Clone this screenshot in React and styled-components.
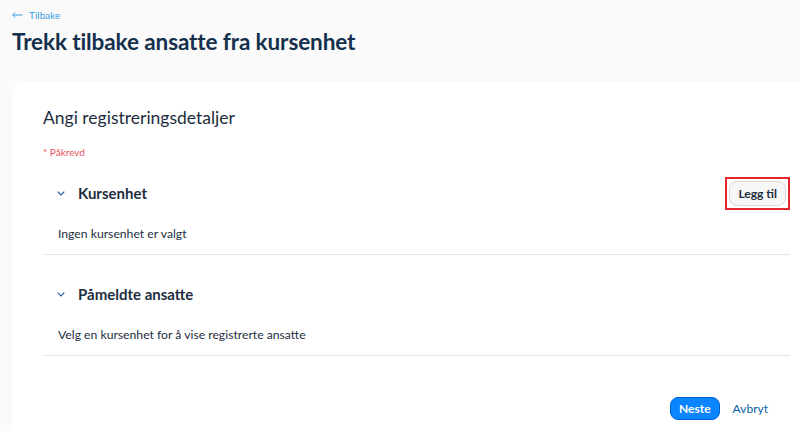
import styled, { createGlobalStyle } from "styled-components";

const GlobalStyle = createGlobalStyle`
    html, body {
        margin: 0;
        padding: 0;
        background: #fafafa;
        font-family: Lato, "Noto Sans", sans-serif;
        color: #1d2d3e;
    }
`;

const Page = styled.div`
    width: 800px;
    height: 431px;
    overflow: hidden;
    display: flex;
    flex-direction: column;
`;

const Header = styled.header`
    padding: 8px 12px 0;
    height: 82px;
    box-sizing: border-box;
`;

const BackLink = styled.a`
    display: flex;
    align-items: center;
    gap: 6px;
    font-size: 10px;
    color: #3a9de3;
    text-decoration: none;
    height: 14px;
`;

const Title = styled.h1`
    margin: 5px 0 0;
    font-size: 22.5px;
    line-height: 30px;
    font-weight: 700;
    color: #14304d;
    letter-spacing: -0.1px;
`;

const Card = styled.main`
    flex: 1;
    margin-left: 12px;
    background: #fff;
    border-top-left-radius: 10px;
    padding: 25px 10px 0 31px;
    display: flex;
    flex-direction: column;
`;

const CardTitle = styled.h2`
    margin: 0;
    font-size: 17.5px;
    line-height: 22px;
    font-weight: 400;
    color: #1d2d3e;
`;

const Required = styled.div`
    margin-top: 17px;
    font-size: 10px;
    line-height: 12px;
    color: #e5525b;
`;

const Section = styled.section`
    border-bottom: 1px solid #e5e5e5;
    padding-bottom: 12px;
    margin-top: ${(p) => p.$gap}px;
`;

const SectionHead = styled.div`
    display: flex;
    align-items: center;
    height: 32px;
    padding-left: 14px;
`;

const SectionTitle = styled.h3`
    margin: 0 0 0 13px;
    font-size: 15px;
    font-weight: 700;
    color: #1d2d3e;
    flex: 1;
`;

const Highlight = styled.div`
    border: 2px solid #e3262c;
    padding: 2px;
    display: flex;
`;

const GhostButton = styled.button`
    font-family: inherit;
    font-size: 12px;
    font-weight: 700;
    color: #1d2d3e;
    background: #f7f7f7;
    border: 1px solid #d9d9d9;
    border-radius: 8px;
    height: 25px;
    padding: 0 8px;
`;

const SectionText = styled.p`
    margin: 17px 0 0 15px;
    font-size: 12.2px;
    color: #1d2d3e;
    line-height: 16px;
`;

const Footer = styled.div`
    margin-top: auto;
    display: flex;
    justify-content: flex-end;
    align-items: center;
    gap: 12px;
    padding: 0 22px 11px 0;
`;

const PrimaryButton = styled.button`
    font-family: inherit;
    font-size: 12px;
    font-weight: 700;
    color: #fff;
    background: #0a84ff;
    border: 1px solid #0064d9;
    border-radius: 8px;
    height: 23px;
    padding: 0 8px;
    margin-right: 1px;
`;

const LinkButton = styled.button`
    font-family: inherit;
    font-size: 12px;
    font-weight: 400;
    color: #0a5fa8;
    background: none;
    border: none;
    padding: 0;
`;

const Chevron = () => (
    <svg width="8" height="5" viewBox="0 0 8 5">
        <path d="M0.7 0.7L4 4 7.3 0.7" fill="none" stroke="#1d5a9a" strokeWidth="1.1" />
    </svg>
);

const Arrow = () => (
    <svg width="11" height="6" viewBox="0 0 11 6">
        <path d="M3 0.5L0.8 3 3 5.5M0.8 3H10.5" fill="none" stroke="#3a9de3" strokeWidth="1" />
    </svg>
);

export default function App() {
    return (
        <Page>
            <GlobalStyle />
            <Header>
                <BackLink href="#">
                    <Arrow />
                    Tilbake
                </BackLink>
                <Title>Trekk tilbake ansatte fra kursenhet</Title>
            </Header>
            <Card>
                <CardTitle>Angi registreringsdetaljer</CardTitle>
                <Required>* Påkrevd</Required>
                <Section $gap={19}>
                    <SectionHead>
                        <Chevron />
                        <SectionTitle>Kursenhet</SectionTitle>
                        <Highlight>
                            <GhostButton>Legg til</GhostButton>
                        </Highlight>
                    </SectionHead>
                    <SectionText>Ingen kursenhet er valgt</SectionText>
                </Section>
                <Section $gap={23}>
                    <SectionHead>
                        <Chevron />
                        <SectionTitle>Påmeldte ansatte</SectionTitle>
                    </SectionHead>
                    <SectionText>Velg en kursenhet for å vise registrerte ansatte</SectionText>
                </Section>
                <Footer>
                    <PrimaryButton>Neste</PrimaryButton>
                    <LinkButton>Avbryt</LinkButton>
                </Footer>
            </Card>
        </Page>
    );
}
